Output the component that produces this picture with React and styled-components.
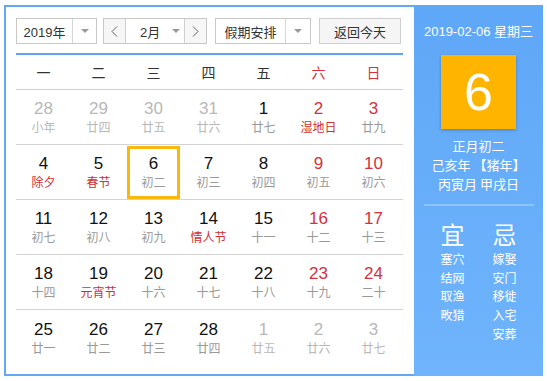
import React from "react";
import styled, { createGlobalStyle } from "styled-components";

const GlobalStyle = createGlobalStyle`
  html, body {
    margin: 0;
    padding: 0;
    background: #fff;
  }
  body {
    font-family: "Liberation Sans", Arial, "Noto Sans CJK SC", sans-serif;
  }
`;

const Frame = styled.div`
  margin: 5px 0 0 4px;
  width: 539px;
  height: 371px;
  box-sizing: border-box;
  border: 2px solid #62a8f4;
  display: flex;
  background: #fff;
`;

const Main = styled.div`
  flex: 1;
  padding: 11px 11px 0 10px;
  display: flex;
  flex-direction: column;
`;

const Toolbar = styled.div`
  display: flex;
  align-items: center;
  height: 26px;
  padding-bottom: 9px;
  border-bottom: 2px solid #5ea4ee;
`;

const Select = styled.div`
  display: flex;
  height: 26px;
  width: ${(p) => p.$width}px;
  box-sizing: border-box;
  border: 1px solid #c8c8c8;
  background: #fff;
  margin-right: ${(p) => p.$gap || 0}px;
  color: #333;
  font-size: 13px;
`;

const SelectLabel = styled.div`
  flex: 1;
  display: flex;
  align-items: center;
  justify-content: center;
  border-right: 1px solid #d6d6d6;
`;

const SelectArrow = styled.div`
  width: ${(p) => p.$width || 23}px;
  display: flex;
  align-items: center;
  justify-content: center;
  &::before {
    content: "";
    border-left: 4px solid transparent;
    border-right: 4px solid transparent;
    border-top: 4px solid #9a9a9a;
  }
`;

const MonthGroup = styled.div`
  display: flex;
  height: 26px;
  width: 104px;
  box-sizing: border-box;
  border: 1px solid #c8c8c8;
  margin-right: 8px;
  color: #333;
  font-size: 13px;
`;

const StepButton = styled.div`
  width: 21px;
  background: #f6f6f6;
  display: flex;
  align-items: center;
  justify-content: center;
  border-${(p) => (p.$side === "left" ? "right" : "left")}: 1px solid #d0d0d0;
`;

const MonthSelect = styled.div`
  flex: 1;
  display: flex;
  align-items: center;
  background: #fff;
  padding-left: 14px;
  gap: 12px;
  &::after {
    content: "";
    border-left: 4px solid transparent;
    border-right: 4px solid transparent;
    border-top: 4px solid #9a9a9a;
  }
`;

const TodayButton = styled.div`
  width: 82px;
  height: 26px;
  box-sizing: border-box;
  border: 1px solid #cfcfcf;
  background: #f5f5f5;
  color: #333;
  font-size: 13px;
  display: flex;
  align-items: center;
  justify-content: center;
`;

const WeekHead = styled.div`
  display: grid;
  grid-template-columns: repeat(7, 55px);
  height: 34px;
  border-bottom: 1px solid #cfcfcf;
`;

const WeekName = styled.div`
  display: flex;
  align-items: center;
  justify-content: center;
  font-size: 14px;
  color: ${(p) => (p.$weekend ? "#d4313d" : "#333")};
`;

const Row = styled.div`
  display: grid;
  grid-template-columns: repeat(7, 55px);
  height: 55px;
  box-sizing: border-box;
  border-bottom: ${(p) => (p.$last ? "none" : "1px solid #d4d4d4")};
`;

const Cell = styled.div`
  display: flex;
  flex-direction: column;
  align-items: center;
  justify-content: center;
  margin: 1px 1px 0;
  box-shadow: ${(p) => (p.$selected ? "inset 0 0 0 3px #f9b80e" : "none")};
`;

const DayNum = styled.div`
  font-size: 17px;
  line-height: 20px;
  color: ${(p) => (p.$muted ? "#b8b8b8" : p.$red ? "#d4313d" : "#111")};
`;

const Lunar = styled.div`
  font-size: 12px;
  line-height: 16px;
  margin-top: 1px;
  color: ${(p) => (p.$fest ? "#cf2f33" : p.$muted ? "#b8b8b8" : "#999")};
`;

const Panel = styled.div`
  width: 129px;
  margin: -1px -2px -2px 0;
  background: linear-gradient(#5fa7f7, #6fb4fc);
  color: #fff;
  display: flex;
  flex-direction: column;
  align-items: center;
`;

const DateLine = styled.div`
  font-size: 13px;
  margin-top: 18px;
  line-height: 16px;
`;

const BigDay = styled.div`
  width: 75px;
  height: 74px;
  margin-top: 15px;
  background: #ffb400;
  box-shadow: 0 1px 3px rgba(0, 0, 0, 0.25);
  font-size: 52px;
  display: flex;
  align-items: center;
  justify-content: center;
`;

const LunarInfo = styled.div`
  margin-top: 7px;
  font-size: 13px;
  line-height: 19px;
  text-align: center;
  font-family: "Noto Sans CJK SC", sans-serif;
`;

const Divider = styled.div`
  width: 110px;
  height: 2px;
  background: #8ec3fb;
  margin-top: 11px;
`;

const Advice = styled.div`
  display: flex;
  gap: 28px;
  margin-top: 14px;
`;

const AdviceCol = styled.div`
  display: flex;
  flex-direction: column;
  align-items: center;
  font-family: "Noto Sans CJK SC", sans-serif;
  h2 {
    margin: 0 0 2px;
    font-size: 24px;
    line-height: 28px;
    font-weight: 400;
  }
  span {
    font-size: 12px;
    line-height: 18.7px;
  }
`;

const Chevron = ({ dir }) => (
  <svg width="7" height="11" viewBox="0 0 7 11">
    <polyline
      points={dir === "left" ? "6,0.5 1,5.5 6,10.5" : "1,0.5 6,5.5 1,10.5"}
      fill="none"
      stroke="#666"
      strokeWidth="1"
    />
  </svg>
);

const weeks = ["一", "二", "三", "四", "五", "六", "日"];

// [day, lunar, flags]  m = other month, f = festival, s = selected
const days = [
  [28, "小年", "m"], [29, "廿四", "m"], [30, "廿五", "m"], [31, "廿六", "m"], [1, "廿七"], [2, "湿地日", "f"], [3, "廿九"],
  [4, "除夕", "f"], [5, "春节", "f"], [6, "初二", "s"], [7, "初三"], [8, "初四"], [9, "初五"], [10, "初六"],
  [11, "初七"], [12, "初八"], [13, "初九"], [14, "情人节", "f"], [15, "十一"], [16, "十二"], [17, "十三"],
  [18, "十四"], [19, "元宵节", "f"], [20, "十六"], [21, "十七"], [22, "十八"], [23, "十九"], [24, "二十"],
  [25, "廿一"], [26, "廿二"], [27, "廿三"], [28, "廿四"], [1, "廿五", "m"], [2, "廿六", "m"], [3, "廿七", "m"],
];

const rows = [0, 1, 2, 3, 4].map((r) => days.slice(r * 7, r * 7 + 7));

export default function App() {
  return (
    <>
      <GlobalStyle />
      <Frame>
        <Main>
          <Toolbar>
            <Select $width={81} $gap={6}>
              <SelectLabel>2019年</SelectLabel>
              <SelectArrow />
            </Select>
            <MonthGroup>
              <StepButton $side="left">
                <Chevron dir="left" />
              </StepButton>
              <MonthSelect>2月</MonthSelect>
              <StepButton $side="right">
                <Chevron dir="right" />
              </StepButton>
            </MonthGroup>
            <Select $width={96} $gap={8}>
              <SelectLabel>假期安排</SelectLabel>
              <SelectArrow $width={24} />
            </Select>
            <TodayButton>返回今天</TodayButton>
          </Toolbar>
          <WeekHead>
            {weeks.map((w, i) => (
              <WeekName key={w} $weekend={i > 4}>
                {w}
              </WeekName>
            ))}
          </WeekHead>
          {rows.map((row, r) => (
            <Row key={r} $last={r === rows.length - 1}>
              {row.map(([day, lunar, flag = ""], c) => {
                const muted = flag === "m";
                return (
                  <Cell key={c} $selected={flag === "s"}>
                    <DayNum $muted={muted} $red={c > 4}>
                      {day}
                    </DayNum>
                    <Lunar $muted={muted} $fest={flag === "f"}>
                      {lunar}
                    </Lunar>
                  </Cell>
                );
              })}
            </Row>
          ))}
        </Main>
        <Panel>
          <DateLine>2019-02-06 星期三</DateLine>
          <BigDay>6</BigDay>
          <LunarInfo>
            正月初二
            <br />
            己亥年 【猪年】
            <br />
            丙寅月 甲戌日
          </LunarInfo>
          <Divider />
          <Advice>
            <AdviceCol>
              <h2>宜</h2>
              <span>塞穴</span>
              <span>结网</span>
              <span>取渔</span>
              <span>畋猎</span>
            </AdviceCol>
            <AdviceCol>
              <h2>忌</h2>
              <span>嫁娶</span>
              <span>安门</span>
              <span>移徙</span>
              <span>入宅</span>
              <span>安葬</span>
            </AdviceCol>
          </Advice>
        </Panel>
      </Frame>
    </>
  );
}
